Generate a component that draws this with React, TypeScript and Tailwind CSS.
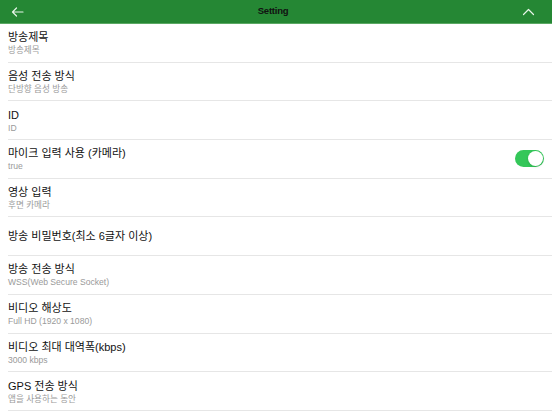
import { useState } from 'react';

type Row = { title: string; sub?: string; toggle?: boolean };

const rows: Row[] = [
    { title: "방송제목", sub: "방송제목" },
    { title: "음성 전송 방식", sub: "단방향 음성 방송" },
    { title: "ID", sub: "ID" },
    { title: "마이크 입력 사용 (카메라)", sub: "true", toggle: true },
    { title: "영상 입력", sub: "후면 카메라" },
    { title: "방송 비밀번호(최소 6글자 이상)" },
    { title: "방송 전송 방식", sub: "WSS(Web Secure Socket)" },
    { title: "비디오 해상도", sub: "Full HD (1920 x 1080)" },
    { title: "비디오 최대 대역폭(kbps)", sub: "3000 kbps" },
    { title: "GPS 전송 방식", sub: "앱을 사용하는 동안" },
];

function Toggle({ on, onChange }: { on: boolean; onChange: () => void }) {
    return (
        <button
            type="button"
            onClick={onChange}
            className={`relative w-[29px] h-[17px] rounded-full ${on ? 'bg-[#34c759]' : 'bg-[#e5e5ea]'}`}
        >
            <span
                className={`absolute top-[1px] w-[15px] h-[15px] rounded-full bg-white shadow ${on ? 'left-[13px]' : 'left-[1px]'}`}
            />
        </button>
    );
}

export default function App() {
    const [mic, setMic] = useState(true);

    return (
        <div className="w-[552px] h-[414px] overflow-hidden bg-white font-['Liberation_Sans','Noto_Sans_CJK_KR',sans-serif]">
            <div className="h-[24px] bg-[#258734] border-b border-[#5aa863] flex items-center justify-between px-[11px]">
                <svg width="13" height="10" viewBox="0 0 13 10" fill="none" stroke="#e8f5e9" strokeWidth="1.2" strokeLinecap="round" strokeLinejoin="round">
                    <path d="M12 5H1.5M5.5 1L1.5 5l4 4" />
                </svg>
                <span className="text-[9.5px] font-bold text-[#111] tracking-tight">Setting</span>
                <svg width="13" height="8" viewBox="0 0 13 8" fill="none" stroke="#e8f5e9" strokeWidth="1.2" strokeLinecap="round" strokeLinejoin="round" className="mr-[6px]">
                    <path d="M1.5 6.5L6.5 1.5l5 5" />
                </svg>
            </div>

            <div className="pl-[8px]">
                {rows.map((r, i) => (
                    <div key={i} className="h-[38.7px] border-b border-[#e6e6e6] flex items-center justify-between pr-[8px]">
                        <div className="flex flex-col pt-[1px]">
                            <span className="text-[11px] leading-[15px] text-[#111]">{r.title}</span>
                            {r.sub && <span className="text-[8.6px] leading-[11px] text-[#9a9a9a]">{r.sub}</span>}
                        </div>
                        {r.toggle && <Toggle on={mic} onChange={() => setMic(v => !v)} />}
                    </div>
                ))}
            </div>
        </div>
    );
}
